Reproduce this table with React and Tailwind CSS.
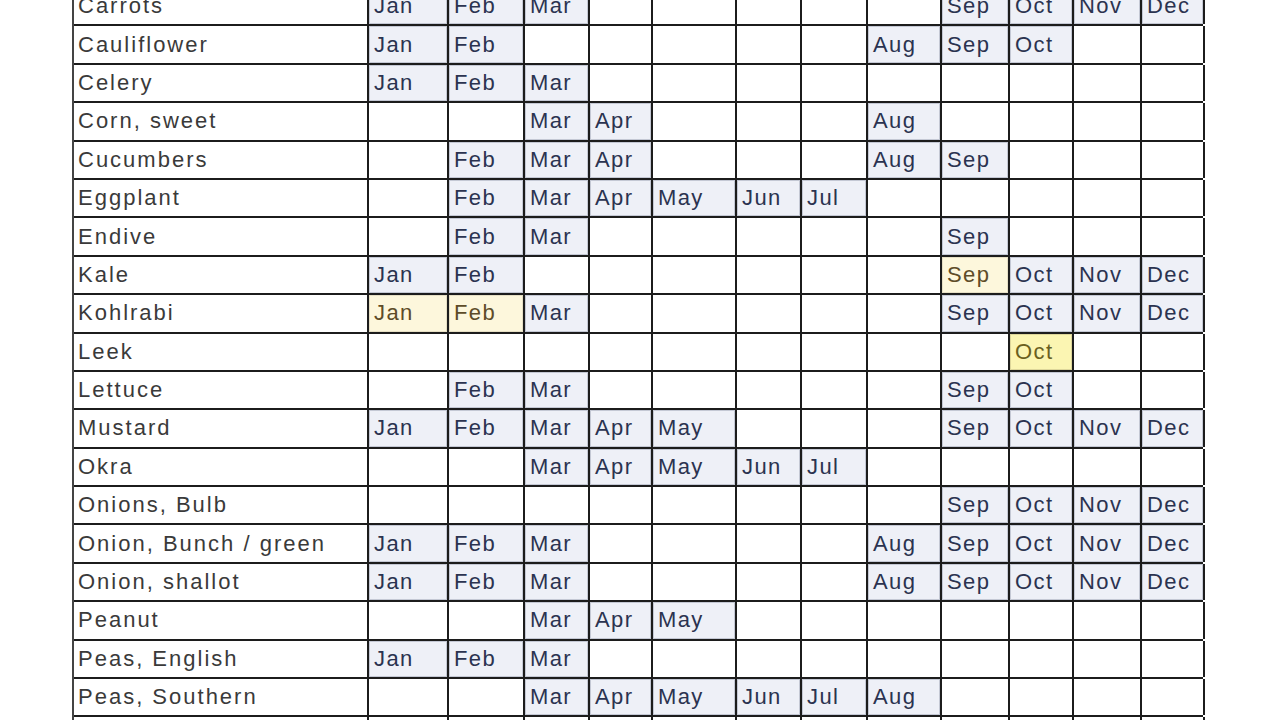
import React from 'react';

const MONTHS = ['Jan', 'Feb', 'Mar', 'Apr', 'May', 'Jun', 'Jul', 'Aug', 'Sep', 'Oct', 'Nov', 'Dec'];

// y = light yellow, Y = stronger yellow
const rows = [
  { name: 'Carrots', m: 'Jan Feb Mar Sep Oct Nov Dec' },
  { name: 'Cauliflower', m: 'Jan Feb Aug Sep Oct' },
  { name: 'Celery', m: 'Jan Feb Mar' },
  { name: 'Corn, sweet', m: 'Mar Apr Aug' },
  { name: 'Cucumbers', m: 'Feb Mar Apr Aug Sep' },
  { name: 'Eggplant', m: 'Feb Mar Apr May Jun Jul' },
  { name: 'Endive', m: 'Feb Mar Sep' },
  { name: 'Kale', m: 'Jan Feb Sep Oct Nov Dec', hi: { Sep: 'y' } },
  { name: 'Kohlrabi', m: 'Jan Feb Mar Sep Oct Nov Dec', hi: { Jan: 'y', Feb: 'y' } },
  { name: 'Leek', m: 'Oct', hi: { Oct: 'Y' } },
  { name: 'Lettuce', m: 'Feb Mar Sep Oct' },
  { name: 'Mustard', m: 'Jan Feb Mar Apr May Sep Oct Nov Dec' },
  { name: 'Okra', m: 'Mar Apr May Jun Jul' },
  { name: 'Onions, Bulb', m: 'Sep Oct Nov Dec' },
  { name: 'Onion, Bunch / green', m: 'Jan Feb Mar Aug Sep Oct Nov Dec' },
  { name: 'Onion, shallot', m: 'Jan Feb Mar Aug Sep Oct Nov Dec' },
  { name: 'Peanut', m: 'Mar Apr May' },
  { name: 'Peas, English', m: 'Jan Feb Mar' },
  { name: 'Peas, Southern', m: 'Mar Apr May Jun Jul Aug' },
  { name: '', m: '' },
];

const Cell = ({ month, active, hi }) => {
  let cls = 'bg-white';
  let txt = 'text-[#2b3350]';
  if (active) cls = 'bg-[#eef0f7] shadow-[inset_0_0_0_1px_#c4c8d4]';
  if (hi === 'y') {
    cls = 'bg-[#fdf7dc] shadow-[inset_0_0_0_1px_#e6dfc4]';
    txt = 'text-[#5e4c28]';
  }
  if (hi === 'Y') {
    cls = 'bg-[#fbf5b2] shadow-[inset_0_0_0_1px_#ddd69a]';
    txt = 'text-[#6a6020]';
  }
  return (
    <div className={`border-r-2 border-[#1c1c1c] flex items-center pl-[5px] ${cls}`}>
      {active && <span className={`${txt} tracking-[1.4px]`}>{month}</span>}
    </div>
  );
};

export default function App() {
  return (
    <div className="w-[1280px] h-[720px] overflow-hidden bg-white">
      <div
        className="ml-[72px] mt-[-12px] w-[1131px] border-l-2 border-[#444] text-[22px] leading-none"
        style={{ fontFamily: '"Liberation Sans", Arial, sans-serif' }}
      >
        {rows.map((r, i) => {
          const set = r.m ? r.m.split(' ') : [];
          return (
            <div
              key={i}
              className="grid grid-cols-[295px_80px_76px_65px_63px_84px_65px_66px_74px_68px_64px_68px_63px] h-[38.4px] border-b-2 border-[#1c1c1c]"
            >
              <div className="border-r-2 border-[#1c1c1c] flex items-center pl-[4px] text-[#3a3a3a] tracking-[2px] whitespace-nowrap">
                {r.name}
              </div>
              {MONTHS.map((mo) => (
                <Cell key={mo} month={mo} active={set.includes(mo)} hi={r.hi && r.hi[mo]} />
              ))}
            </div>
          );
        })}
      </div>
    </div>
  );
}
